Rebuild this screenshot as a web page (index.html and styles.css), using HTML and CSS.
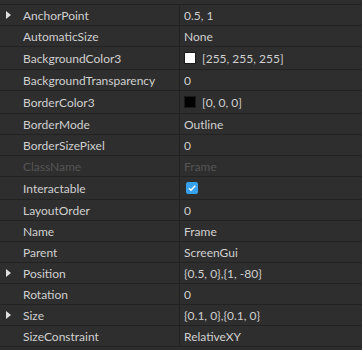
FILE: index.html
```html
<!DOCTYPE html>
<html lang="en">
<head>
    <meta charset="UTF-8">
    <title>Properties</title>
    <link rel="stylesheet" href="styles.css">
</head>
<body>
    <div class="props">
        <div class="row">
            <div class="name"><span class="arrow"></span>AnchorPoint</div>
            <div class="value">0.5, 1</div>
        </div>
        <div class="row">
            <div class="name">AutomaticSize</div>
            <div class="value">None</div>
        </div>
        <div class="row tall">
            <div class="name">BackgroundColor3</div>
            <div class="value"><span class="swatch white"></span>[255, 255, 255]</div>
        </div>
        <div class="row">
            <div class="name">BackgroundTransparency</div>
            <div class="value">0</div>
        </div>
        <div class="row tall">
            <div class="name">BorderColor3</div>
            <div class="value"><span class="swatch black"></span>[0, 0, 0]</div>
        </div>
        <div class="row">
            <div class="name">BorderMode</div>
            <div class="value">Outline</div>
        </div>
        <div class="row">
            <div class="name">BorderSizePixel</div>
            <div class="value">0</div>
        </div>
        <div class="row disabled">
            <div class="name">ClassName</div>
            <div class="value">Frame</div>
        </div>
        <div class="row tall">
            <div class="name">Interactable</div>
            <div class="value">
                <span class="checkbox">
                    <svg width="12" height="12" viewBox="0 0 12 12"><path d="M3 6.2 L5 8.2 L9.2 3.8" fill="none" stroke="#fff" stroke-width="1.6"/></svg>
                </span>
            </div>
        </div>
        <div class="row">
            <div class="name">LayoutOrder</div>
            <div class="value">0</div>
        </div>
        <div class="row">
            <div class="name">Name</div>
            <div class="value">Frame</div>
        </div>
        <div class="row">
            <div class="name">Parent</div>
            <div class="value">ScreenGui</div>
        </div>
        <div class="row">
            <div class="name"><span class="arrow"></span>Position</div>
            <div class="value">{0.5, 0},{1, -80}</div>
        </div>
        <div class="row">
            <div class="name">Rotation</div>
            <div class="value">0</div>
        </div>
        <div class="row">
            <div class="name"><span class="arrow"></span>Size</div>
            <div class="value">{0.1, 0},{0.1, 0}</div>
        </div>
        <div class="row">
            <div class="name">SizeConstraint</div>
            <div class="value">RelativeXY</div>
        </div>
    </div>
</body>
</html>
```

FILE: styles.css
```css
* {
    margin: 0;
    padding: 0;
    box-sizing: border-box;
}

:root {
    --panel-bg: #2e2e2e;
    --line: #222222;
    --text: #d0d0d0;
    --text-dim: #555555;
    --accent: #35a1f0;
}

body {
    background-color: var(--panel-bg);
    color: var(--text);
    font-family: 'Lato', sans-serif;
    font-size: 12px;
    height: 350px;
    overflow: hidden;
}

/* Property grid */
.props {
    padding-top: 4px;
    border-bottom: 1px solid var(--line);
}

.row {
    display: grid;
    grid-template-columns: 180px 1fr;
    height: 21px;
    border-top: 1px solid var(--line);
}

.row.tall {
    height: 23px;
}

.name,
.value {
    display: flex;
    align-items: center;
    white-space: nowrap;
}

.name {
    position: relative;
    padding-left: 23px;
    border-right: 1px solid var(--line);
}

.value {
    padding-left: 4px;
}

.row.disabled .name,
.row.disabled .value {
    color: var(--text-dim);
}

/* Expand arrow */
.arrow {
    position: absolute;
    left: 6px;
    top: 50%;
    margin-top: -4px;
    width: 0;
    height: 0;
    border-top: 4px solid transparent;
    border-bottom: 4px solid transparent;
    border-left: 5px solid #e0e0e0;
}

/* Color swatch */
.swatch {
    width: 12px;
    height: 12px;
    margin-right: 6px;
    border: 1px solid #1a1a1a;
}

.swatch.white {
    background-color: #ffffff;
}

.swatch.black {
    background-color: #000000;
}

/* Checkbox */
.checkbox {
    display: flex;
    width: 12px;
    height: 12px;
    margin-left: 2px;
    border-radius: 2px;
    background-color: var(--accent);
}
```
